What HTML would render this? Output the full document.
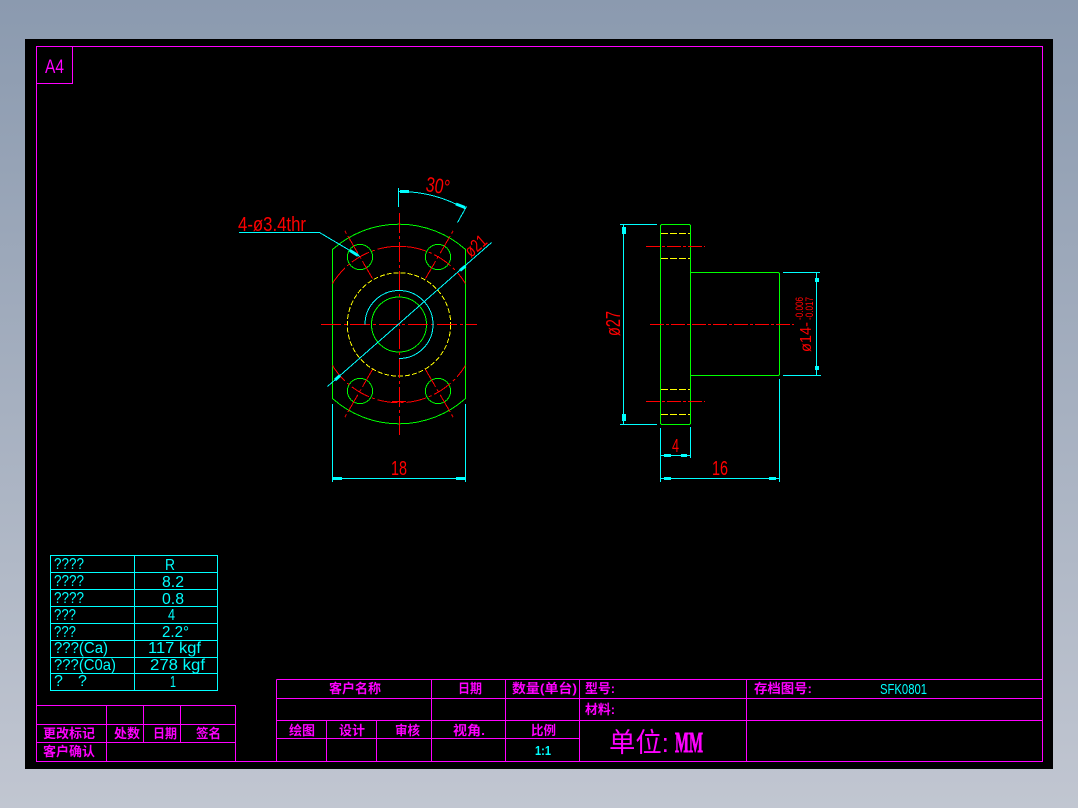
<!DOCTYPE html>
<html>
<head>
<meta charset="utf-8">
<style>
html,body{margin:0;padding:0;width:1078px;height:808px;overflow:hidden;background:linear-gradient(180deg,#8b9aaf 0%,#c1c6d1 100%);}
svg{position:absolute;left:0;top:0;display:block;}
.m{fill:#ff00ff;font-family:"Liberation Sans","Noto Sans CJK SC",sans-serif;font-weight:700;font-size:13px;}
.c{fill:#00ffff;font-family:"Liberation Sans",sans-serif;font-size:16px;}
.r{fill:#ff0000;font-family:"Liberation Sans",sans-serif;font-size:20px;}
.ln{fill:none;shape-rendering:crispEdges;stroke-width:1;}
</style>
</head>
<body>
<svg width="1078" height="808" viewBox="0 0 1078 808" xmlns="http://www.w3.org/2000/svg">
<rect x="25" y="39" width="1028" height="730" fill="#000"/>

<!-- magenta frame and title block -->
<g class="ln" stroke="#ff00ff">
<path d="M36.5 46.5H1042.5V761.5H36.5Z"/>
<path d="M72.5 46.5V83.5H36.5"/>
<path d="M36.5 705.5H235.5V761.5M36.5 724.5H235.5M36.5 742.5H235.5M106.5 705.5V761.5M143.5 705.5V742.5M180.5 705.5V742.5"/>
<path d="M276.5 679.5H1042.5M276.5 698.5H1042.5M276.5 720.5H1042.5M276.5 738.5H579.5"/>
<path d="M276.5 679.5V761.5M326.5 720.5V761.5M376.5 720.5V761.5M431.5 679.5V761.5M505.5 679.5V761.5M579.5 679.5V761.5M746.5 679.5V761.5"/>
</g>

<text x="45" y="73" style="fill:#ff00ff;font-family:'Liberation Sans',sans-serif;font-size:19px" textLength="19" lengthAdjust="spacingAndGlyphs">A4</text>

<!-- title block text -->
<text class="m" x="43" y="738" textLength="52" lengthAdjust="spacingAndGlyphs">更改标记</text>
<text class="m" x="114" y="738" textLength="26" lengthAdjust="spacingAndGlyphs">处数</text>
<text class="m" x="153" y="738" textLength="24" lengthAdjust="spacingAndGlyphs">日期</text>
<text class="m" x="196" y="738" textLength="25" lengthAdjust="spacingAndGlyphs">签名</text>
<text class="m" x="43" y="756" textLength="52" lengthAdjust="spacingAndGlyphs">客户确认</text>
<text class="m" x="329" y="693" textLength="52" lengthAdjust="spacingAndGlyphs">客户名称</text>
<text class="m" x="458" y="693" textLength="24" lengthAdjust="spacingAndGlyphs">日期</text>
<text class="m" x="512" y="693" textLength="65" lengthAdjust="spacingAndGlyphs">数量(单台)</text>
<text class="m" x="585" y="693" textLength="30" lengthAdjust="spacingAndGlyphs">型号:</text>
<text class="m" x="585" y="714" textLength="30" lengthAdjust="spacingAndGlyphs">材料:</text>
<text class="m" x="289" y="735" textLength="26" lengthAdjust="spacingAndGlyphs">绘图</text>
<text class="m" x="339" y="735" textLength="26" lengthAdjust="spacingAndGlyphs">设计</text>
<text class="m" x="395" y="735" textLength="25" lengthAdjust="spacingAndGlyphs">审核</text>
<text class="m" x="453" y="735" textLength="32" lengthAdjust="spacingAndGlyphs">视角.</text>
<text class="m" x="531" y="735" textLength="25" lengthAdjust="spacingAndGlyphs">比例</text>
<text class="m" x="754" y="693" textLength="58" lengthAdjust="spacingAndGlyphs">存档图号:</text>
<text x="609" y="752" style="fill:#ff00ff;font-family:'Liberation Sans','Noto Sans CJK SC',sans-serif;font-size:27px" textLength="60" lengthAdjust="spacingAndGlyphs">单位:</text>
<text x="675" y="752" style="fill:#ff00ff;stroke:#ff00ff;stroke-width:0.9;font-family:'Liberation Serif',serif;font-weight:700;font-size:28px" textLength="28" lengthAdjust="spacingAndGlyphs">MM</text>
<text x="535" y="755" style="fill:#00ffff;font-family:'Liberation Sans',sans-serif;font-weight:700;font-size:13px" textLength="16" lengthAdjust="spacingAndGlyphs">1:1</text>
<text x="880" y="694" style="fill:#00ffff;font-family:'Liberation Sans',sans-serif;font-size:15px" textLength="47" lengthAdjust="spacingAndGlyphs">SFK0801</text>

<!-- cyan parameter table -->
<g class="ln" stroke="#00ffff">
<path d="M50.5 555.5H217.5V690.5H50.5Z"/>
<path d="M134.5 555.5V690.5M50.5 572.5H217.5M50.5 589.5H217.5M50.5 606.5H217.5M50.5 623.5H217.5M50.5 640.5H217.5M50.5 657.5H217.5M50.5 673.5H217.5"/>
</g>
<g class="c">
<text x="54" y="569" textLength="30" lengthAdjust="spacingAndGlyphs">????</text>
<text x="54" y="586" textLength="30" lengthAdjust="spacingAndGlyphs">????</text>
<text x="54" y="603" textLength="30" lengthAdjust="spacingAndGlyphs">????</text>
<text x="54" y="620" textLength="22" lengthAdjust="spacingAndGlyphs">???</text>
<text x="54" y="637" textLength="22" lengthAdjust="spacingAndGlyphs">???</text>
<text x="54" y="653" textLength="54" lengthAdjust="spacingAndGlyphs">???(Ca)</text>
<text x="54" y="670" textLength="62" lengthAdjust="spacingAndGlyphs">???(C0a)</text>
<text x="54" y="686">?</text>
<text x="78" y="686">?</text>
<text x="165" y="570" textLength="10" lengthAdjust="spacingAndGlyphs">R</text>
<text x="162" y="587" textLength="22" lengthAdjust="spacingAndGlyphs">8.2</text>
<text x="162" y="604" textLength="22" lengthAdjust="spacingAndGlyphs">0.8</text>
<text x="168" y="620" textLength="7" lengthAdjust="spacingAndGlyphs">4</text>
<text x="162" y="637" textLength="27" lengthAdjust="spacingAndGlyphs">2.2°</text>
<text x="148" y="653" textLength="53" lengthAdjust="spacingAndGlyphs">117 kgf</text>
<text x="150" y="670" textLength="55" lengthAdjust="spacingAndGlyphs">278 kgf</text>
<text x="170" y="687" textLength="6" lengthAdjust="spacingAndGlyphs">1</text>
</g>

<!-- FRONT VIEW -->
<g class="ln" stroke="#00ff00">
<path d="M332.5 249.5A100 100 0 0 1 465.5 249.5V398.5A100 100 0 0 1 332.5 398.5Z"/>
<circle cx="360" cy="257" r="12.6"/>
<circle cx="438" cy="257" r="12.6"/>
<circle cx="360" cy="391" r="12.6"/>
<circle cx="438" cy="391" r="12.6"/>
<circle cx="399" cy="324.5" r="27.5"/>
</g>
<circle class="ln" cx="399" cy="324.5" r="51.7" stroke="#ffff00" stroke-dasharray="5 2"/>
<g class="ln" stroke="#ff0000" stroke-dasharray="20 3 3 3">
<path d="M321 324.5H477"/>
<path d="M399.5 213V435"/>
<path d="M332.5 283.5A78 78 0 0 1 465.5 283.5"/>
<path d="M332.5 365.5A78 78 0 0 0 465.5 365.5"/>
<path d="M372.5 278.5L343.5 228.5"/>
<path d="M425.5 278.5L454.5 228.5"/>
<path d="M372.5 369.5L343.5 419.5"/>
<path d="M425.5 369.5L454.5 419.5"/>
</g>
<g class="ln" stroke="#ff0000">
<path d="M392 246.5H406M392 401.5H406"/>
</g>
<g class="ln" stroke="#00ffff">
<path d="M365 324.5A34 34 0 1 1 399 358.5"/>
<path d="M327.5 386.5L491.5 242.5"/>
<path d="M239 232.5H319.5L360 256.5"/>
<path d="M398.5 188V207"/>
<path d="M398.5 191.5A133 133 0 0 1 465.5 209"/>
<path d="M457.5 222.5L466.5 206.5"/>
<path d="M332.5 404V482M465.5 404V482M332.5 478.5H465.5"/>
</g>
<g fill="none" stroke="#00ffff" stroke-width="3">
<path d="M400 191.5H409"/>
<path d="M456 204L465 207.5"/>
<path d="M350 250.5L358 255.5"/>
<path d="M335 380L340 375.5"/>
<path d="M460 270.5L465.5 266"/>
</g>
<g fill="#00ffff">
<rect x="333" y="477" width="9" height="3"/>
<rect x="456" y="477" width="9" height="3"/>
</g>
<text class="r" x="238" y="231" textLength="68" lengthAdjust="spacingAndGlyphs">4-ø3.4thr</text>
<text class="r" x="391" y="475" textLength="16" lengthAdjust="spacingAndGlyphs">18</text>
<text class="r" transform="translate(425,191) rotate(9)" x="0" y="0" style="font-size:21px" textLength="24" lengthAdjust="spacingAndGlyphs">30°</text>
<text class="r" transform="translate(471,258) rotate(-41)" x="0" y="0" style="font-size:18px" textLength="23" lengthAdjust="spacingAndGlyphs">ø21</text>

<!-- SIDE VIEW -->
<g class="ln" stroke="#00ff00">
<path d="M661.5 224.5H689.5L690.5 225.5V423.5L689.5 424.5H661.5L660.5 423.5V225.5Z"/>
<path d="M690.5 272.5H778.5L779.5 273.5V374.5L778.5 375.5H690.5"/>
</g>
<g class="ln" stroke="#ffff00" stroke-dasharray="7 2">
<path d="M661 233.5H690M661 258.5H690M661 389.5H690M661 414.5H690"/>
</g>
<g class="ln" stroke="#ff0000" stroke-dasharray="14 2 3 2">
<path d="M646 246.5H705M646 401.5H705M650 324.5H794"/>
</g>
<g class="ln" stroke="#00ffff">
<path d="M620 224.5H657M620 424.5H657M623.5 224.5V424.5"/>
<path d="M783 272.5H820M783 375.5H821M816.5 272.5V375.5"/>
<path d="M660.5 428V482M690.5 427V458M660.5 455.5H690.5"/>
<path d="M779.5 379V482M660.5 478.5H779.5"/>
</g>
<g fill="#00ffff">
<rect x="622" y="227" width="4" height="7"/>
<rect x="622" y="414" width="4" height="7"/>
<rect x="815" y="278" width="4" height="4"/>
<rect x="815" y="366" width="4" height="4"/>
<rect x="664" y="454" width="7" height="3"/>
<rect x="681" y="454" width="6" height="3"/>
<rect x="664" y="477" width="7" height="3"/>
<rect x="769" y="477" width="7" height="3"/>
</g>
<text class="r" x="672" y="452" style="font-size:18px" textLength="7" lengthAdjust="spacingAndGlyphs">4</text>
<text class="r" x="712" y="475" textLength="16" lengthAdjust="spacingAndGlyphs">16</text>
<text class="r" transform="translate(620,336) rotate(-90)" x="0" y="0" textLength="25" lengthAdjust="spacingAndGlyphs">ø27</text>
<text class="r" transform="translate(811,352) rotate(-90)" x="0" y="0" style="font-size:16px" textLength="30" lengthAdjust="spacingAndGlyphs">ø14-</text>
<text class="r" transform="translate(803,320) rotate(-90)" x="0" y="0" style="font-size:11px" textLength="23" lengthAdjust="spacingAndGlyphs">-0.006</text>
<text class="r" transform="translate(813,320) rotate(-90)" x="0" y="0" style="font-size:11px" textLength="23" lengthAdjust="spacingAndGlyphs">-0.017</text>
</svg>
</body>
</html>
